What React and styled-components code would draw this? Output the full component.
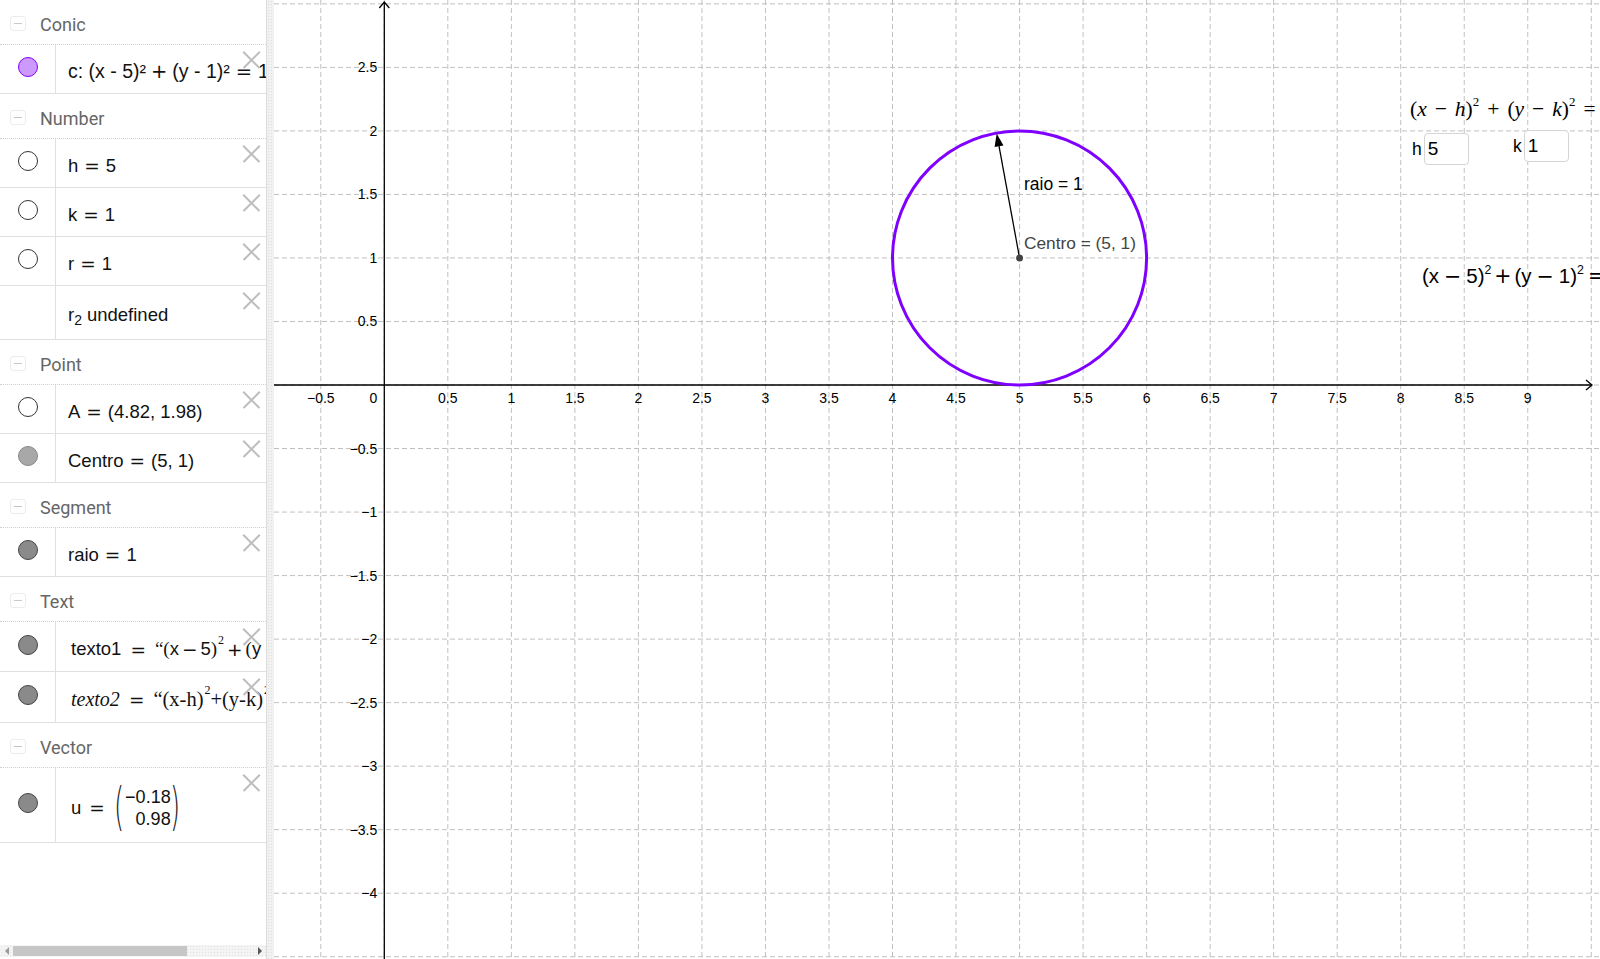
import React from "react";
import styled, { createGlobalStyle } from "styled-components";

const GlobalStyle = createGlobalStyle`
  html, body { margin: 0; padding: 0; height: 959px; overflow: hidden; background: #fff; }
  #root { height: 959px; }
  * { box-sizing: border-box; }
`;

const Page = styled.div`
  display: flex;
  width: 1600px;
  height: 959px;
  background: #fff;
  font-family: "Liberation Sans", Arial, sans-serif;
`;

/* ---------- Algebra sidebar ---------- */
const Sidebar = styled.aside`
  position: relative;
  width: 266px;
  height: 959px;
  display: flex;
  flex-direction: column;
  background: #fff;
  overflow: hidden;
`;

const List = styled.div`
  display: flex;
  flex-direction: column;
`;

const GroupHeader = styled.div`
  display: flex;
  align-items: center;
  gap: 14px;
  height: 45px;
  padding: 5px 0 0 10px;
  border-bottom: 1px dotted #cfcfcf;
  font-family: Roboto, "Open Sans", sans-serif;
  font-size: 18px;
  color: #666;
`;

const Collapse = styled.span`
  position: relative;
  width: 16px;
  height: 15px;
  margin-top: -3px;
  border: 1px solid #ececec;
  border-radius: 3px;
  &::after {
    content: "";
    position: absolute;
    left: 3px;
    right: 3px;
    top: 6px;
    height: 1px;
    background: #c8c8c8;
  }
`;

const Row = styled.div`
  position: relative;
  display: flex;
  height: ${(p) => p.$h || 49}px;
  border-bottom: 1px solid #e0e0e0;
`;

const MarbleCell = styled.div`
  width: 56px;
  flex: none;
  display: flex;
  align-items: center;
  justify-content: center;
  border-right: 1px solid #e0e0e0;
  padding-bottom: 4px;
`;

const Marble = styled.span`
  width: 20px;
  height: 20px;
  border-radius: 50%;
  background: ${(p) => p.$fill || "#fff"};
  border: 1px solid ${(p) => p.$stroke || "#333"};
`;

const Content = styled.div`
  flex: 1;
  min-width: 0;
  display: flex;
  align-items: center;
  padding: 5px 0 0 ${(p) => p.$pad || 12}px;
  font-family: "Liberation Sans", Arial, sans-serif;
  font-size: ${(p) => p.$size || 18.5}px;
  color: #111;
  white-space: pre;
  overflow: hidden;
  sub { font-size: 14px; position: relative; top: 5px; margin-right: 5px; }
`;

const Sup = styled.span`
  font-family: "Liberation Serif", "Times New Roman", serif;
  font-size: 12px;
  position: relative;
  top: -9px;
  margin-left: 1px;
`;

const Op = styled.span`
  display: inline-block;
  margin: 0 ${(p) => p.$m ?? 6}px;
  font-family: ${(p) => (p.$serif ? `"Liberation Serif", serif` : `"DejaVu Sans", sans-serif`)};
`;

const Serif = styled.span`
  font-family: "Liberation Serif", "Times New Roman", serif;
  font-size: ${(p) => p.$size || 19}px;
  font-style: ${(p) => (p.$italic ? "italic" : "normal")};
`;

const Close = styled.span`
  position: absolute;
  top: 6px;
  right: 6px;
  width: 17px;
  height: 17px;
  &::before, &::after {
    content: "";
    position: absolute;
    left: -3px;
    top: 8px;
    width: 23px;
    height: 1.6px;
    background: #bdbdbd;
  }
  &::before { transform: rotate(45deg); }
  &::after { transform: rotate(-45deg); }
`;

const Matrix = styled.span`
  display: inline-flex;
  align-items: center;
  margin-left: -4px;
`;

const Paren = styled.span`
  font-family: "DejaVu Sans", sans-serif;
  font-weight: 200;
  font-size: 52px;
  line-height: 1;
  transform: scaleX(0.5);
  color: #222;
  margin-top: -4px;
`;

const Column = styled.span`
  display: flex;
  flex-direction: column;
  align-items: flex-end;
  font-size: 18px;
  line-height: 22px;
  margin: 0 -6px 0 -4px;
`;

const ScrollBar = styled.div`
  position: absolute;
  left: 0;
  right: 0;
  bottom: 2px;
  height: 12px;
  display: flex;
  align-items: center;
  background-color: #f4f4f4;
  background-image: radial-gradient(#e2e2e2 0.6px, transparent 0.8px);
  background-size: 3px 3px;
`;

const ScrollArrow = styled.span`
  width: 0;
  height: 0;
  margin: 0 4px 0 5px;
  border-top: 4px solid transparent;
  border-bottom: 4px solid transparent;
  ${(p) => (p.$dir === "left" ? "border-right: 4px solid #9a9a9a;" : "border-left: 4px solid #555;")}
`;

const ScrollThumb = styled.span`
  width: 174px;
  height: 10px;
  background: #c6c6c6;
`;

const ScrollSpacer = styled.span`
  flex: 1;
`;

const Dragger = styled.div`
  width: 8px;
  flex: none;
  height: 959px;
  border-left: 1px solid #dcdcdc;
  background-color: #f1f1f1;
  background-image: radial-gradient(#dedede 0.6px, transparent 0.8px);
  background-size: 3px 3px;
`;

/* ---------- Graphics view ---------- */
const Graphics = styled.div`
  position: relative;
  flex: 1;
  height: 959px;
  overflow: hidden;
`;

const Plot = styled.svg`
  display: block;
  width: 100%;
  height: 100%;
`;

const Floating = styled.div`
  position: absolute;
  left: ${(p) => p.$x}px;
  top: ${(p) => p.$y}px;
  white-space: nowrap;
  line-height: 1;
  font-family: ${(p) => (p.$serif ? `"Liberation Serif", "Times New Roman", serif` : `"Liberation Sans", Arial, sans-serif`)};
  font-size: ${(p) => p.$size || 17}px;
  color: ${(p) => p.$color || "#000"};
  sup { font-size: 0.6em; vertical-align: 0.75em; }
  i { font-style: italic; }
`;

const InputGroup = styled.div`
  position: absolute;
  left: ${(p) => p.$x}px;
  top: ${(p) => p.$y}px;
  display: flex;
  align-items: center;
  gap: 2px;
  font-family: "Liberation Sans", Arial, sans-serif;
  font-size: 17.5px;
  color: #000;
`;

const InputBox = styled.span`
  width: 45px;
  height: 32px;
  display: flex;
  align-items: center;
  padding-left: 3px;
  border: 1px solid #d5d5d5;
  border-radius: 4px;
  background: #fff;
  font-size: 19px;
`;

const U = 127.05;
const OX = 110.3;
const OY = 385;
const W = 1326;
const H = 959;
const px = (x) => OX + x * U;
const py = (y) => OY - y * U;

const fmt = (v) => (v < 0 ? "\u2212" + String(-v) : String(v));

function Canvas() {
  const xs = [];
  for (let k = -1; k <= 19; k++) xs.push(k / 2);
  const ys = [];
  for (let k = -9; k <= 6; k++) ys.push(k / 2);
  const xLabels = xs.filter((v) => v !== 0 && v <= 9);
  const yLabels = ys.filter((v) => v !== 0 && v <= 2.5 && v >= -4);

  const cx = px(5), cy = py(1);
  const ax = px(4.82), ay = py(1.98);
  const dx = ax - cx, dy = ay - cy;
  const len = Math.hypot(dx, dy);
  const ux = dx / len, uy = dy / len;
  const hl = 13, hw = 4.5;
  const bx = ax - ux * hl, by = ay - uy * hl;
  const head = `${ax},${ay} ${bx - uy * hw},${by + ux * hw} ${bx + uy * hw},${by - ux * hw}`;

  return (
    <Plot viewBox={`0 0 ${W} ${H}`}>
      <g stroke="#c0c0c0" strokeWidth="1" strokeDasharray="5 3">
        {xs.map((v) => (
          <line key={"gx" + v} x1={px(v)} y1={0} x2={px(v)} y2={H} />
        ))}
        {ys.map((v) => (
          <line key={"gy" + v} x1={0} y1={py(v)} x2={W} y2={py(v)} />
        ))}
      </g>
      <g stroke="#000" strokeWidth="1.3" fill="none">
        <line x1={0} y1={OY} x2={W - 8} y2={OY} />
        <line x1={OX} y1={2} x2={OX} y2={H} />
        <polyline points={`${W - 14},${OY - 5} ${W - 8},${OY} ${W - 14},${OY + 5}`} />
        <polyline points={`${OX - 5},${8} ${OX},${2} ${OX + 5},${8}`} />
      </g>
      <g fontFamily="Liberation Sans, Arial, sans-serif" fontSize="14" fill="#000">
        {xLabels.map((v) => (
          <text key={"lx" + v} x={px(v)} y={OY + 18} textAnchor="middle">
            {fmt(v)}
          </text>
        ))}
        <text x={OX - 7} y={OY + 18} textAnchor="end">0</text>
        {yLabels.map((v) => (
          <text key={"ly" + v} x={OX - 7} y={py(v) + 5} textAnchor="end">
            {fmt(v)}
          </text>
        ))}
      </g>
      <circle cx={cx} cy={cy} r={U} fill="none" stroke="#7f00ff" strokeWidth="3" />
      <line x1={cx} y1={cy} x2={bx} y2={by} stroke="#000" strokeWidth="1.3" />
      <polygon points={head} fill="#000" />
      <circle cx={cx} cy={cy} r="3.5" fill="#444" />
    </Plot>
  );
}

const G = 274; // graphics left offset

export default function App() {
  return (
    <>
      <GlobalStyle />
      <Page>
        <Sidebar>
          <List>
            <GroupHeader><Collapse />Conic</GroupHeader>
            <Row>
              <MarbleCell><Marble $fill="#cc99ff" $stroke="#7f00ff" /></MarbleCell>
              <Content $size={19.5}>c: (x - 5)²<Op $m={5}>+</Op>(y - 1)²<Op $m={6}>=</Op>1</Content>
              <Close />
            </Row>

            <GroupHeader><Collapse />Number</GroupHeader>
            <Row>
              <MarbleCell><Marble /></MarbleCell>
              <Content>h<Op>=</Op>5</Content>
              <Close />
            </Row>
            <Row>
              <MarbleCell><Marble /></MarbleCell>
              <Content>k<Op>=</Op>1</Content>
              <Close />
            </Row>
            <Row>
              <MarbleCell><Marble /></MarbleCell>
              <Content>r<Op>=</Op>1</Content>
              <Close />
            </Row>
            <Row $h={54}>
              <MarbleCell />
              <Content>r<sub>2</sub>undefined</Content>
              <Close />
            </Row>

            <GroupHeader><Collapse />Point</GroupHeader>
            <Row>
              <MarbleCell><Marble /></MarbleCell>
              <Content>A<Op>=</Op>(4.82, 1.98)</Content>
              <Close />
            </Row>
            <Row>
              <MarbleCell><Marble $fill="#a8a8a8" $stroke="#888" /></MarbleCell>
              <Content>Centro<Op>=</Op>(5, 1)</Content>
              <Close />
            </Row>

            <GroupHeader><Collapse />Segment</GroupHeader>
            <Row>
              <MarbleCell><Marble $fill="#8a8a8a" $stroke="#444" /></MarbleCell>
              <Content>raio<Op>=</Op>1</Content>
              <Close />
            </Row>

            <GroupHeader><Collapse />Text</GroupHeader>
            <Row $h={50}>
              <MarbleCell><Marble $fill="#8a8a8a" $stroke="#444" /></MarbleCell>
              <Content $pad={15}>
                texto1<Op $m={9}>=</Op><Serif>“(</Serif>x<Op $m={3}>−</Op>5<Serif>)</Serif><Sup>2</Sup><Op $m={3}>+</Op><Serif>(</Serif>y<Op $m={3}>−</Op>1<Serif>)</Serif><Sup>2</Sup>
              </Content>
              <Close />
            </Row>
            <Row $h={51}>
              <MarbleCell><Marble $fill="#8a8a8a" $stroke="#444" /></MarbleCell>
              <Content $pad={15}>
                <Serif $italic $size={20}>texto2</Serif><Op $m={9}>=</Op><Serif $size={20.5}>“(x-h)</Serif><Sup>2</Sup><Serif $size={20.5}>+(y-k)</Serif><Sup>2</Sup>
              </Content>
              <Close />
            </Row>

            <GroupHeader><Collapse />Vector</GroupHeader>
            <Row $h={75}>
              <MarbleCell><Marble $fill="#8a8a8a" $stroke="#444" /></MarbleCell>
              <Content $pad={15}>
                u<Op $m={8}>=</Op>
                <Matrix>
                  <Paren>(</Paren>
                  <Column>
                    <span>−0.18</span>
                    <span>0.98</span>
                  </Column>
                  <Paren>)</Paren>
                </Matrix>
              </Content>
              <Close />
            </Row>
          </List>
          <ScrollBar>
            <ScrollArrow $dir="left" />
            <ScrollThumb />
            <ScrollSpacer />
            <ScrollArrow $dir="right" />
          </ScrollBar>
        </Sidebar>
        <Dragger />
        <Graphics>
          <Canvas />
          <Floating $x={1024 - G} $y={176} $size={17.5}>raio = 1</Floating>
          <Floating $x={1024 - G} $y={235} $size={17.3} $color="#444">Centro = (5, 1)</Floating>
          <Floating $x={1410 - G} $y={96} $size={21.5} $serif>
            (<i>x</i><Op $serif $m={8}>−</Op><i>h</i>)<sup>2</sup><Op $serif $m={8}>+</Op>(<i>y</i><Op $serif $m={8}>−</Op><i>k</i>)<sup>2</sup><Op $serif $m={8}>=</Op><i>r</i><sup>2</sup>
          </Floating>
          <InputGroup $x={1412 - G} $y={133}>
            h<InputBox>5</InputBox>
          </InputGroup>
          <InputGroup $x={1513 - G} $y={130}>
            k<InputBox>1</InputBox>
          </InputGroup>
          <Floating $x={1422 - G} $y={264} $size={20.5}>
            (x<Op $m={5}>−</Op>5)<sup>2</sup><Op $m={3}>+</Op>(y<Op $m={5}>−</Op>1)<sup>2</sup><Op $m={4}>=</Op>1
          </Floating>
        </Graphics>
      </Page>
    </>
  );
}
